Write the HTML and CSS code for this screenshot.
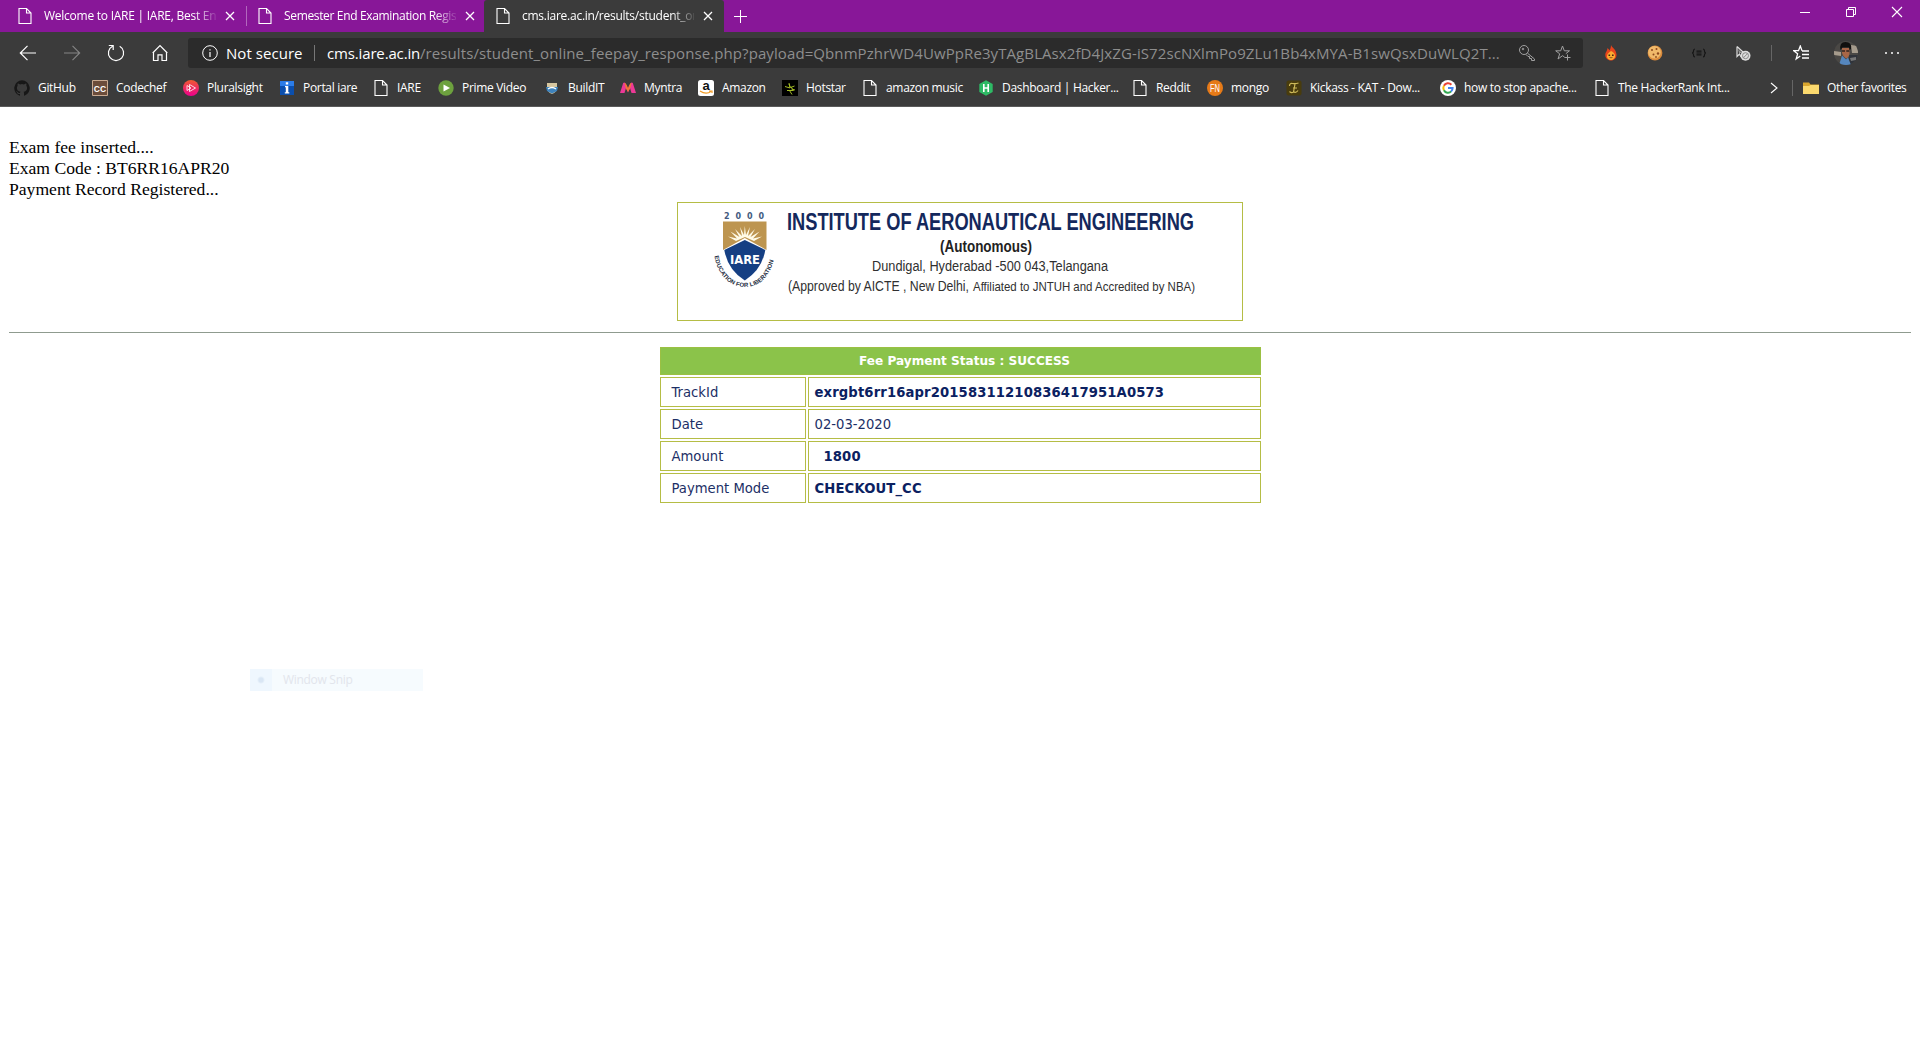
FILE: index.html
```html
<!DOCTYPE html>
<html lang="en">
<head>
<meta charset="utf-8">
<title>cms.iare.ac.in/results/student_online_feepay_response.php</title>
<link rel="stylesheet" href="styles.css">
</head>
<body>
<svg class="defs" width="0" height="0" aria-hidden="true">
  <symbol id="doc" viewBox="0 0 16 16"><path d="M2 .5h7.500l4.500 4.500v10.500H2zM9.500 .5v4.500h4.500" fill="none" stroke="#fff" stroke-width="1.1"/></symbol>
  <symbol id="x" viewBox="0 0 10 10"><path d="M1 1l8 8M9 1l-8 8" fill="none" stroke="#fff" stroke-width="1.3"/></symbol>
</svg>
<header class="tabs">
  <div class="tab"><svg class="i16"><use href="#doc"/></svg><span class="title">Welcome to IARE | IARE, Best Eng</span><svg class="close"><use href="#x"/></svg></div>
  <div class="tab second"><svg class="i16"><use href="#doc"/></svg><span class="title">Semester End Examination Regist</span><svg class="close"><use href="#x"/></svg></div>
  <div class="tab active"><svg class="i16"><use href="#doc"/></svg><span class="title">cms.iare.ac.in/results/student_onl</span><svg class="close"><use href="#x"/></svg></div>
  <svg class="plus" viewBox="0 0 14 14"><path d="M7 0v14M0 7h14" stroke="#fff" stroke-width="1.1"/></svg>
  <div class="window-buttons">
    <svg viewBox="0 0 12 12"><path d="M1 6.500h10" stroke="#fff"/></svg>
    <svg viewBox="0 0 12 12"><path d="M1.500 3.500h7v7h-7zM3.500 3.500v-2h7v7h-2" fill="none" stroke="#fff"/></svg>
    <svg viewBox="0 0 12 12"><path d="M1 1l10 10M11 1L1 11" stroke="#fff" stroke-width="1.1"/></svg>
  </div>
</header>
<nav class="toolbar">
  <div class="nav">
    <svg viewBox="0 0 18 18"><path d="M17 9H1.500M8.500 1.800L1.300 9l7.200 7.200" fill="none" stroke="#fff" stroke-width="1.2"/></svg>
    <svg viewBox="0 0 18 18"><path d="M1 9h15.500M9.500 1.800L16.700 9l-7.200 7.200" fill="none" stroke="#858585" stroke-width="1.1"/></svg>
    <svg viewBox="0 0 18 18"><path d="M5.500 2.200A7.600 7.600 0 1 0 12.700 2.300M1.800 1.500h4.400v4.400" fill="none" stroke="#fff" stroke-width="1.2"/></svg>
    <svg viewBox="0 0 18 18"><path d="M2.500 8.200v8.300h4.500v-5.600h4v5.600h4.500V8.200M1.700 9L9 1.700 16.300 9" fill="none" stroke="#fff" stroke-width="1.2"/></svg>
  </div>
  <div class="address">
    <svg class="info" viewBox="0 0 16 16"><circle cx="8" cy="8" r="7.300" fill="none" stroke="#fff"/><path d="M8 7v5M8 4.200v1.300" stroke="#fff" stroke-width="1.2"/></svg>
    <span class="insecure">Not secure</span><span class="bar"></span>
    <span class="host">cms.iare.ac.in</span><span class="path">/results/student_online_feepay_response.php?payload=QbnmPzhrWD4UwPpRe3yTAgBLAsx2fD4JxZG-iS72scNXlmPo9ZLu1Bb4xMYA-B1swQsxDuWLQ2T...</span>
    <svg class="key" viewBox="0 0 16 16"><circle cx="5" cy="5" r="4.500"/><circle cx="4" cy="4" r=".8"/><path d="M8.300 8L15.500 14v1.500H12.500v-2h-2v-2H9L6.800 9.300"/></svg>
    <svg class="addstar" viewBox="0 0 16 16"><path d="M9.500 12L7.500 10.700 3 14l1.700-5.200L.7 5.800h5L7.500 1l1.800 4.800h5.200l-3.700 2.900M12.500 9.500v6M9.500 12.500h6"/></svg>
  </div>
  <div class="extensions">
    <svg viewBox="0 0 16 16"><path d="M8 0c1 3 5 4 5.500 9.500C13.700 13 11 15.500 8 15.500S2 13 2.300 9.500C2.500 7 4 6.500 4.500 3c1 1 1.500 1.500 1.800 2.500C7.500 4 8 2 8 0z" fill="#e8441b"/><path d="M8 6c4 2 4 4 4 5.500S10 15 8 15s-4-1.500-4-3.500S5 8 8 6z" fill="#fbad32"/><path d="M5.500 9.500h1.600v1.600H5.500zM9 9.500h1.600v1.600H9zM6 12.500q2 1.500 4 0" fill="#482111"/></svg>
    <svg viewBox="0 0 16 16"><circle cx="8" cy="8" r="7.400" fill="#d98a3c"/><circle cx="7.500" cy="7.300" r="6.300" fill="#f0b96a"/><g fill="#8d481c"><circle cx="5" cy="5" r="1"/><circle cx="9.500" cy="4" r="1"/><circle cx="11" cy="8.500" r="1.200"/><circle cx="6.500" cy="9.500" r="1"/><circle cx="9" cy="12" r=".9"/></g></svg>
    <svg viewBox="0 0 16 16"><path d="M4 4q-1.500 0-1.500 2T1 8q1.500 0 1.500 2T4 12M12 4q1.500 0 1.500 2T15 8q-1.500 0-1.500 2t-1.500 2M5.500 6.200h5M5.500 8h5M5.500 9.800h5" fill="none" stroke="#151515" stroke-width="1.200"/></svg>
    <svg viewBox="0 0 16 16"><path d="M2 1.500v10l2.500-2.500 1.500 3M2 1.500l6 5.500" fill="none" stroke="#ddd" stroke-width="1.200"/><path d="M3 4l4 4-3 0z" fill="#999"/><circle cx="10.500" cy="10.700" r="5" fill="#ddd"/><circle cx="10.500" cy="10.700" r="3" fill="none" stroke="#888"/><path d="M8.500 12.700l4-4" stroke="#888"/></svg>
    <i class="divider"></i>
    <svg viewBox="0 0 16 16"><path d="M9 5.700L7.300 1 5.500 5.700H.8L4.600 8.800 3.200 14l4.100-3M9 6h7M9 9.500h7M9 13h7" fill="none" stroke="#fff" stroke-width="1.300"/></svg>
    <svg class="avatar" viewBox="0 0 24 24"><clipPath id="av"><circle cx="12" cy="12" r="12"/></clipPath><g clip-path="url(#av)"><path fill="#4a4845" d="M0 0h24v24H0z"/><path fill="#a59b8c" d="M17 4l7 1v7l-6 0zM0 10l7 1v4l-7-1z"/><path fill="#30343b" d="M15 14h10v10H15z"/><path fill="#777" d="M16 17l6-1v3l-5 1z"/><path d="M8 7h7.500v6q-1 4-3.500 4.500Q9 16 8 12z" fill="#a86647"/><path d="M6.500 9Q5 1 11.500 1T17 8l-1.500 1-.5-2.500H8.500z" fill="#11100f"/><path d="M8 9.200h3v1.500H8zM12.300 9.200h3v1.500h-3z" fill="#302422"/><path d="M5 24l3-9.500 4 4 2-2 3 7.500z" fill="#5586bd"/></g></svg>
    <svg viewBox="0 0 16 16"><g fill="#fff"><circle cx="2" cy="8" r="1"/><circle cx="8" cy="8" r="1"/><circle cx="14" cy="8" r="1"/></g></svg>
  </div>
</nav>
<nav class="bookmarks">
  <a><svg class="i16" viewBox="0 0 16 16"><path fill="#171717" d="M8 .2a8 8 0 0 0-2.500 15.500c.4.100.5-.2.500-.4v-1.400c-2.200.5-2.700-1-2.700-1-.4-.9-.9-1.100-.9-1.100-.7-.5.100-.5.100-.5.800.1 1.200.8 1.200.8.700 1.200 1.900.9 2.300.7.100-.5.300-.9.500-1.100-1.800-.2-3.600-.9-3.600-3.900 0-.9.300-1.600.8-2.100-.1-.2-.4-1 .1-2.100 0 0 .7-.2 2.200.8a7.500 7.500 0 0 1 4 0c1.500-1 2.200-.8 2.200-.8.400 1.100.2 1.900.1 2.100.5.600.8 1.300.8 2.100 0 3.100-1.900 3.800-3.600 4 .3.200.5.700.5 1.400v2.100c0 .200.100.500.500.400A8 8 0 0 0 8 .2z"/></svg><span>GitHub</span></a>
  <a><svg class="i16" viewBox="0 0 16 16"><path fill="#6b4c3a" stroke="#c9aa91" d="M.5.5h15v15H.5z"/><text x="8" y="11.500" class="cc" text-anchor="middle">CC</text></svg><span>Codechef</span></a>
  <a><svg class="i16" viewBox="0 0 16 16"><defs><linearGradient id="ps" x2="0" y2="1"><stop stop-color="#f05a32"/><stop offset="1" stop-color="#ec008c"/></linearGradient></defs><circle cx="8" cy="8" r="8" fill="url(#ps)"/><path d="M6.500 4.500l6 3.500-6 3.500zM4 5.500L8 8l-4 2.500z" fill="none" stroke="#fff" stroke-width=".8"/></svg><span>Pluralsight</span></a>
  <a><svg class="i16" viewBox="0 0 16 16"><path fill="#0b4fae" d="M1 1h14v14H1z"/><path fill="#2b7ce8" d="M1 1h14v5H1z"/><path fill="#fff" d="M6.800 2.200h2.400v2.300H6.800zM6 6h3.300v6.200h1v1.300H5.800v-1.300h1V7.300H6z"/></svg><span>Portal iare</span></a>
  <a><svg class="i16"><use href="#doc"/></svg><span>IARE</span></a>
  <a><svg class="i16" viewBox="0 0 16 16"><circle cx="8" cy="8" r="7.700" fill="#6da13e"/><path fill="#fff" d="M5.500 4.500L12 8l-6.500 3.500z"/></svg><span>Prime Video</span></a>
  <a><svg class="i16" viewBox="0 0 16 16"><path d="M3 3h10v5q0 4-5 6-5-2-5-6z" fill="#d6c69f"/><path d="M2 7h12l-1 4-5 2.500L3 11z" fill="#3e83bd"/><path d="M4 9q4-3 8 0" stroke="#fff" stroke-width="1.300" fill="none"/></svg><span>BuildIT</span></a>
  <a><svg class="i16" viewBox="0 0 16 16"><path d="M0 13L3.200 3q1-1 2 0L8 9l2.800-6q1-1 2 0L16 13h-4.500L10 8l-2 4.500L6 8l-1.500 5z" fill="#ec3996"/><path d="M4.500 3q1.500-.5 3.500 5 2-5.500 3.500-5-.5 5-3.500 9-3-4-3.500-9z" fill="#f27536"/></svg><span>Myntra</span></a>
  <a><svg class="i16" viewBox="0 0 16 16"><rect width="16" height="16" rx="2.500" fill="#fff"/><text x="8" y="10" class="az" text-anchor="middle">a</text><path d="M2 11q6 4 11 .5M11 11h3v2" fill="none" stroke="#f19b25" stroke-width="1.200"/></svg><span>Amazon</span></a>
  <a><svg class="i16" viewBox="0 0 16 16"><path d="M0 0h16v16H0z"/><path d="M3 6.500l5 1.500-1-5M7 4l1.500 3.500L12.500 6M5 10.500h6.500L9 7M13 10L9.500 9M7.500 10.500l2.500 4" fill="none" stroke="#a5bd25" stroke-width="1"/></svg><span>Hotstar</span></a>
  <a><svg class="i16"><use href="#doc"/></svg><span>amazon music</span></a>
  <a><svg class="i16" viewBox="0 0 16 16"><path fill="#2eba65" d="M8 .2l6.700 3.900v7.800L8 15.800l-6.700-3.900V4.100z"/><path d="M5.800 4v8M10.200 4v8M5.800 8h4.400" stroke="#fff" stroke-width="1.600"/></svg><span>Dashboard | Hacker...</span></a>
  <a><svg class="i16"><use href="#doc"/></svg><span>Reddit</span></a>
  <a><svg class="i16" viewBox="0 0 16 16"><circle cx="8" cy="8" r="8" fill="#e67a17"/><text x="3" y="12" class="fn" textLength="10" lengthAdjust="spacingAndGlyphs">FN</text></svg><span>mongo</span></a>
  <a><svg class="i16" viewBox="0 0 16 16"><rect x=".5" y=".5" width="15" height="15" rx="2" fill="#493c0d"/><path d="M3.500 6q0-3 3-2.500t6-.500M9 4L7.500 12q-2 1.500-4-.500M7 11.500q3 2 5-1M7 8h4" fill="none" stroke="#cdb959" stroke-width="1.200"/></svg><span>Kickass - KAT - Dow...</span></a>
  <a><svg class="i16" viewBox="0 0 16 16"><circle cx="8" cy="8" r="8" fill="#fff"/><g fill="none" stroke-width="2"><path d="M3.900 5.800A4.600 4.600 0 0 1 11.400 4.700" stroke="#ea4335"/><path d="M3.900 10.200a4.600 4.600 0 0 1 0-4.400" stroke="#fbbc05"/><path d="M11.200 11.400a4.600 4.600 0 0 1-7.300-1.200" stroke="#34a853"/><path d="M8 8.100h4.600a4.600 4.600 0 0 1-1.500 3.400" stroke="#4285f4"/></g></svg><span>how to stop apache...</span></a>
  <a><svg class="i16"><use href="#doc"/></svg><span>The HackerRank Int...</span></a>
  <svg class="more" viewBox="0 0 8 12"><path d="M1 1l6 5-6 5" fill="none" stroke="#fff" stroke-width="1.100"/></svg>
  <i class="divider"></i>
  <a><svg class="i16" viewBox="0 0 16 16"><path fill="#d9a62e" d="M0 2.500h6l1.500 2H16v9.500H0z"/><path fill="#fbd96e" d="M0 6h6l1.500-1H16v9H0z"/></svg><span>Other favorites</span></a>
</nav>
<main class="page">
  <p class="log"><br>Exam fee inserted....<br>Exam Code : BT6RR16APR20<br>Payment Record Registered...</p>
  <div class="banner">
    <svg width="564" height="117" viewBox="678 203 564 117">
      <text x="724" y="219" class="year" textLength="40">2000</text>
      <path d="M722.500 221h44.500v22q0 26-22.200 38.500Q722.500 269 722.500 243z" fill="#fff"/>
      <path d="M723 221.500h43.500V250l-21.700-12L723 250z" fill="#bd9550"/>
      <path d="M744.800 226l1.200 9 4-8-2 9 7-7-4.500 8 9-5.500-6.500 7 9-2-8 4.500-9-4-9 4-8-4.500 9 2-6.500-7 9 5.500-4.500-8 7 7-2-9 4 8z" fill="#fffbe7"/>
      <path d="M744.800 240l20.500 10q-3.500 20-20.500 30.500Q727.800 270 724.300 250z" fill="#153f83"/>
      <text x="730" y="263.500" class="iare" textLength="30" lengthAdjust="spacingAndGlyphs">IARE</text>
      <path id="motto" d="M714.500 256C718 276 730 287 745 287S771 276 774.500 256" fill="none"/>
      <text class="motto"><textPath href="#motto" textLength="90">EDUCATION FOR LIBERATION</textPath></text>
      <text class="name" x="787" y="229.500" textLength="407" lengthAdjust="spacingAndGlyphs">INSTITUTE OF AERONAUTICAL ENGINEERING</text>
      <text class="auto" x="940" y="252" textLength="92" lengthAdjust="spacingAndGlyphs">(Autonomous)</text>
      <text class="line" x="872" y="271" textLength="236" lengthAdjust="spacingAndGlyphs">Dundigal, Hyderabad -500 043,Telangana</text>
      <text class="line" x="788" y="291" textLength="181" lengthAdjust="spacingAndGlyphs">(Approved by AICTE , New Delhi,</text>
      <text class="line small" x="973" y="291" textLength="222" lengthAdjust="spacingAndGlyphs">Affiliated to JNTUH and Accredited by NBA)</text>
    </svg>
  </div>
  <hr>
  <table class="status">
    <colgroup><col class="labels"><col></colgroup>
    <tr><th colspan="2">Fee Payment Status : SUCCESS</th></tr>
    <tr><td>TrackId</td><td><b>exrgbt6rr16apr20158311210836417951A0573</b></td></tr>
    <tr><td>Date</td><td>02-03-2020</td></tr>
    <tr><td>Amount</td><td><b class="amount">1800</b></td></tr>
    <tr><td>Payment Mode</td><td><b>CHECKOUT_CC</b></td></tr>
  </table>
  <div class="snip"><i></i><span>Window Snip</span></div>
</main>
</body>
</html>
```
FILE: styles.css
```css
* { box-sizing: border-box; }
html, body { height: 100%; }
body { margin: 0; overflow: hidden; display: flex; flex-direction: column; background: #fff; font-family: "Open Sans", sans-serif; color: #fff; }
svg { display: block; flex: none; }
.defs { position: absolute; }
.i16 { width: 16px; height: 16px; }

.tabs { height: 32px; flex: none; background: #881798; display: flex; align-items: center; }
.tab { width: 243px; height: 32px; padding: 0 8px 0 17px; display: flex; align-items: center; font-size: 12px; }
.tab .title { width: 172px; flex: none; margin-left: 11px; line-height: 20px; overflow: hidden; white-space: nowrap; letter-spacing: -.32px; -webkit-mask-image: linear-gradient(90deg, #000 150px, transparent 175px); mask-image: linear-gradient(90deg, #000 150px, transparent 175px); }
.tab .close { width: 10px; height: 10px; margin-left: 9px; }
.tab:first-child .title { letter-spacing: -.25px; }
.tab.second { width: 238px; margin-left: 3px; padding-left: 10px; border-left: 1px solid; border-image: linear-gradient(transparent 20%, #b267bd 20%, #b267bd 80%, transparent 80%) 1; }
.tab.second .title { letter-spacing: -.34px; }
.tab.active { width: 240px; padding-left: 11px; background: #3b3b3b; border-radius: 3px 3px 0 0; }
.tab.active .title { letter-spacing: -.25px; }
.plus { width: 13px; height: 13px; margin-left: 10px; }
.window-buttons { margin-left: auto; display: flex; gap: 34px; padding: 0 17px 9px 0; }
.window-buttons svg { width: 12px; height: 12px; }

.toolbar { height: 43px; flex: none; display: flex; align-items: center; padding-bottom: 1px; background: #3b3b3b; }
.nav { width: 188px; flex: none; display: flex; gap: 26px; padding-left: 19px; }
.nav svg { width: 18px; height: 18px; }
.address { width: 1395px; flex: none; height: 30px; background: #2b2b2b; border-radius: 3px; display: flex; align-items: center; padding-left: 14px; font-size: 15px; white-space: nowrap; }
.address span { flex: none; }
.info { width: 16px; height: 16px; }
.insecure { width: 78px; margin-left: 8px; letter-spacing: .05px; }
.bar { width: 1px; height: 16px; background: #777; margin: 0 12px 0 10px; }
.host { width: 93px; letter-spacing: -.15px; }
.path { width: 1080px; color: #8e8e8e; letter-spacing: .09px; }
.key, .addstar { width: 16px; height: 16px; fill: none; stroke: #a0a0a0; stroke-width: 1; }
.key { margin-left: 19px; }
.addstar { margin-left: 20px; }
.extensions { flex: 1; display: flex; align-items: center; padding-left: 20px; }
.extensions svg { width: 16px; height: 16px; margin-right: 28px; }
.extensions .divider { flex: none; margin: 0 21px 0 -8px; }
.extensions svg.avatar { width: 24px; height: 24px; margin: 0 26px 0 -3px; }
.extensions svg:last-child { margin-right: 0; }
.divider { width: 1px; height: 16px; background: #666; }

.bookmarks { height: 32px; flex: none; background: #3b3b3b; border-bottom: 1px solid #5a5a5a; padding: 0 0 6px 14px; display: grid; align-items: center; font-size: 12px; grid-template-columns: 78px 91px 96px 94px 65px 106px 76px 78px 84px 80px 116px 154px 75px 79px 154px 154px 176px 22px 11px 110px; }
.bookmarks a { display: flex; align-items: center; gap: 8px; white-space: nowrap; letter-spacing: -.32px; }
.more { width: 8px; height: 12px; }
.cc { font: bold 8.500px "Liberation Sans", sans-serif; fill: #fff; }
.az { font: bold 13px "Liberation Sans", sans-serif; fill: #111; }
.fn { font: 10px "Liberation Sans", sans-serif; fill: #fff; }
.cc, .az, .fn { letter-spacing: 0; }

.page { flex: 1; background: #fff; padding: 9px 9px 0; color: #000; }
.log { margin: 0 0 2px; font: 17.600px/21px "Liberation Serif", serif; }
.banner { width: 566px; height: 119px; margin: 0 auto; border: 1px solid #b5bd45; }
.name { font: bold 24px "Liberation Sans", sans-serif; fill: #14285c; }
.auto { font: bold 17px "Liberation Sans", sans-serif; fill: #222; }
.line { font: 15.500px "Liberation Sans", sans-serif; fill: #303030; }
.small { font-size: 13px; }
.year { font: bold 8px "DejaVu Sans", sans-serif; fill: #445b80; }
.iare { font: bold 12px "DejaVu Sans", sans-serif; fill: #fff; }
.motto { font: bold 6px "Liberation Sans", sans-serif; fill: #222b40; }
hr { height: 1px; border: 0; background: #8f9b8f; margin: 11px 0 12px; }
.status { width: 605px; margin: 0 auto; border-collapse: separate; border-spacing: 2px; table-layout: fixed; font: 13.200px "DejaVu Sans", sans-serif; color: #1c2f66; }
.labels { width: 146px; }
.status th { height: 28px; padding: 0 0 0 9px; background: #8bc34a; border: 1px solid #9bc043; color: #fff; font-size: 12.100px; }
.status td { height: 30px; padding: 0 6px; border: 1px solid #b5bd45; }
.status td:first-child { padding-left: 11px; }
.status td b { color: #0b2161; letter-spacing: .12px; }
.status .amount { padding-left: 9px; }
.snip { position: absolute; left: 250px; top: 669px; width: 173px; height: 22px; display: flex; align-items: center; background: #f6fbfe; color: #e2e5ec; font-size: 12px; line-height: 20px; padding-bottom: 1px; }
.snip i { width: 22px; height: 22px; background: radial-gradient(circle, #d9e6f4 2px, #eff7fe 4px); }
.snip span { margin-left: 11px; letter-spacing: -.3px; }
```
